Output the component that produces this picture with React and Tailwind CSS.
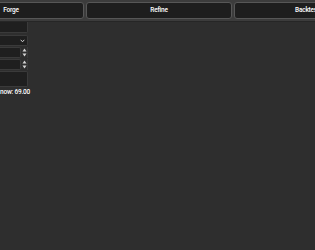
import React from "react";

function Spinner() {
  return (
    <div className="w-[6px] h-full flex flex-col items-center justify-center gap-[1px]">
      <svg width="5" height="4" viewBox="0 0 5 4"><path d="M0.5 3.5 L2.5 0.5 L4.5 3.5 Z" fill="#d4d4d4" /></svg>
      <svg width="5" height="4" viewBox="0 0 5 4"><path d="M0.5 0.5 L2.5 3.5 L4.5 0.5 Z" fill="#d4d4d4" /></svg>
    </div>
  );
}

export default function App() {
  const font = { fontFamily: 'Roboto, "Liberation Sans", Arial, sans-serif' };
  return (
    <div className="w-[315px] h-[250px] overflow-hidden bg-[#2e2e2e] text-white" style={font}>
      <div className="h-[22px] bg-[#3c3c3c] border-b border-[#262626] flex items-start pt-[2px] overflow-hidden">
        <div className="flex gap-[2px] -ml-[62px] shrink-0">
          {["Forge", "Refine", "Backtest"].map((t) => (
            <div key={t} className="w-[146px] h-[17px] shrink-0 rounded-[3px] border border-[#575757] bg-[#1e1e1e] flex items-center justify-center text-[6.5px] font-medium tracking-[-0.2px] leading-none">
              {t}
            </div>
          ))}
        </div>
      </div>
      <div className="flex flex-col w-[28px] overflow-visible">
        <div className="h-[11px] w-[28px] bg-[#1f1f1f] border-r border-b border-[#3a3a3a] rounded-br-[2px]" />
        <div className="mt-[2px] h-[11px] w-[28px] bg-[#1f1f1f] border-r border-y border-[#3a3a3a] rounded-r-[2px] flex items-center justify-end pr-[2px]">
          <svg width="5" height="4" viewBox="0 0 5 4"><path d="M0.7 0.8 L2.5 2.8 L4.3 0.8" stroke="#cfcfcf" strokeWidth="1" fill="none" /></svg>
        </div>
        <div className="mt-[1px] h-[11px] w-[28px] flex border-r border-[#3a3a3a]">
          <div className="w-[22px] h-full bg-[#1f1f1f] border-y border-r border-[#3a3a3a] rounded-r-[2px]" />
          <Spinner />
        </div>
        <div className="mt-[1px] h-[11px] w-[28px] flex border-r border-[#3a3a3a]">
          <div className="w-[22px] h-full bg-[#1f1f1f] border-y border-r border-[#3a3a3a] rounded-r-[2px]" />
          <Spinner />
        </div>
        <div className="mt-[1px] h-[16px] w-[28px] bg-[#1f1f1f] border-r border-y border-[#3a3a3a] rounded-r-[2px]" />
        <div className="mt-[1px] text-[6.5px] font-medium leading-[8px] tracking-[-0.2px] whitespace-nowrap">now: 69.00</div>
      </div>
    </div>
  );
}
